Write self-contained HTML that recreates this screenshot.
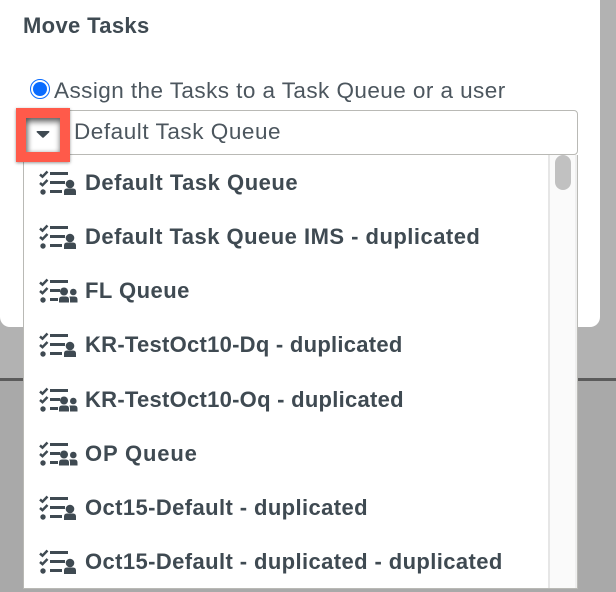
<!DOCTYPE html>
<html><head><meta charset="utf-8"><style>
html,body{margin:0;padding:0}
body{width:616px;height:592px;position:relative;overflow:hidden;background:#b2b2b2;font-family:"Liberation Sans",sans-serif;color:#3f4a52}
div{position:absolute;box-sizing:border-box}
.t{white-space:nowrap}
.i{position:absolute;left:85px;font-weight:700;font-size:22px;letter-spacing:.48px;line-height:26px;white-space:nowrap}
svg.ic{position:absolute;left:39px;width:40px;height:26px}
</style></head><body>
<div style="left:0;top:379px;width:616px;height:213px;background:#a9a9a9"></div>
<div style="left:0;top:378px;width:616px;height:3px;background:#5b5b5b"></div>
<div style="left:0;top:0;width:600px;height:327px;background:#fff;border-radius:0 0 10px 10px"></div>
<div class="t" style="left:23px;top:13px;font-size:22px;letter-spacing:.35px;line-height:26px;font-weight:700">Move Tasks</div>
<div style="left:30px;top:79px;width:20px;height:20px;border-radius:50%;border:1.5px solid #0a6cff;background:#fff"></div>
<div style="left:33px;top:82px;width:14px;height:14px;border-radius:50%;background:#0a6cff"></div>
<div class="t" style="left:54px;top:78px;font-size:22.5px;letter-spacing:.44px;line-height:26px;color:#4c565e">Assign the Tasks to a Task Queue or a user</div>
<div style="left:23px;top:155px;width:555px;height:434px;background:#fff;border-left:1px solid #b9b9b5;border-right:1px solid #b9b9b5;border-bottom:1px solid #b9b9b5"></div>
<div style="left:548px;top:155px;width:29px;height:433px;background:#fafafa;border-left:2px solid #e6e6e6;border-right:2px solid #efefef"></div>
<div style="left:555px;top:155px;width:16px;height:35px;border-radius:8px;background:#c1c1c1"></div>
<div style="left:23px;top:110px;width:555px;height:45px;background:#fff;border:1px solid #b9b9b5;border-radius:4px"></div>
<div class="t" style="left:74px;top:119px;font-size:22.5px;letter-spacing:.55px;line-height:26px;color:#4c565e">Default Task Queue</div>
<div style="left:16px;top:108px;width:54px;height:54px;border:10px solid #ff5a4a;box-shadow:0 1px 3px rgba(0,0,0,.4),inset 0 4px 6px rgba(0,0,0,.55),inset 3px 0 4px rgba(0,0,0,.25);background:#fff"></div>
<svg style="position:absolute;left:36px;top:131px" width="14" height="7" viewBox="0 0 14 7"><path d="M0.500 1Q0.500 0 1.500 0H12.500Q13.500 0 13.500 1L7.700 6.500Q7 7 6.300 6.500Z" fill="#3f4a52"/></svg>
<svg width="0" height="0" style="position:absolute"><defs>
<symbol id="a" viewBox="0 0 40 26"><g fill="none" stroke="#3f4a52" stroke-width="2.500"><path d="M1 4.500l2.500 2.200L8.500 1.500M1 13l2.500 2.200L8.500 10"/></g><circle cx="4" cy="22" r="2.700" fill="#3f4a52"/><path d="M11 2h18v3H11zM11 11h15v3H11zM11 20h12v3H11z" fill="#3f4a52"/><circle cx="31" cy="14" r="4.300" fill="#3f4a52"/><path d="M25 25v-3.500q0-3 3-3h6q3 0 3 3V25z" fill="#3f4a52"/></symbol>
<symbol id="b" viewBox="0 0 40 26"><g fill="none" stroke="#3f4a52" stroke-width="2.500"><path d="M1 4.500l2.500 2.200L8.500 1.500M1 13l2.500 2.200L8.500 10"/></g><circle cx="4" cy="22" r="2.700" fill="#3f4a52"/><path d="M11 2h18v3H11zM11 11h10v3H11zM11 20h8v3H11z" fill="#3f4a52"/><circle cx="25" cy="13.500" r="4" fill="#3f4a52"/><circle cx="34.300" cy="14" r="3.300" fill="#3f4a52"/><path d="M20 24.500v-3q0-3 3-3h4q3 0 3 3v3z" fill="#3f4a52"/><path d="M31 24.500v-3q0-2-.7-3h5.200q3 0 3 3v3z" fill="#3f4a52"/></symbol>
</defs></svg>
<svg class="ic" style="top:170px"><use href="#a"/></svg><div class="i" style="top:170px;letter-spacing:.52px">Default Task Queue</div>
<svg class="ic" style="top:224px"><use href="#a"/></svg><div class="i" style="top:224px">Default Task Queue IMS - duplicated</div>
<svg class="ic" style="top:278px"><use href="#b"/></svg><div class="i" style="top:278px">FL Queue</div>
<svg class="ic" style="top:332px"><use href="#a"/></svg><div class="i" style="top:332px;letter-spacing:.27px">KR-TestOct10-Dq - duplicated</div>
<svg class="ic" style="top:387px"><use href="#b"/></svg><div class="i" style="top:387px;letter-spacing:.27px">KR-TestOct10-Oq - duplicated</div>
<svg class="ic" style="top:441px"><use href="#b"/></svg><div class="i" style="top:441px;letter-spacing:.85px">OP Queue</div>
<svg class="ic" style="top:495px"><use href="#a"/></svg><div class="i" style="top:495px;letter-spacing:.4px">Oct15-Default - duplicated</div>
<svg class="ic" style="top:549px"><use href="#a"/></svg><div class="i" style="top:549px;letter-spacing:.4px">Oct15-Default - duplicated - duplicated</div>
</body></html>
